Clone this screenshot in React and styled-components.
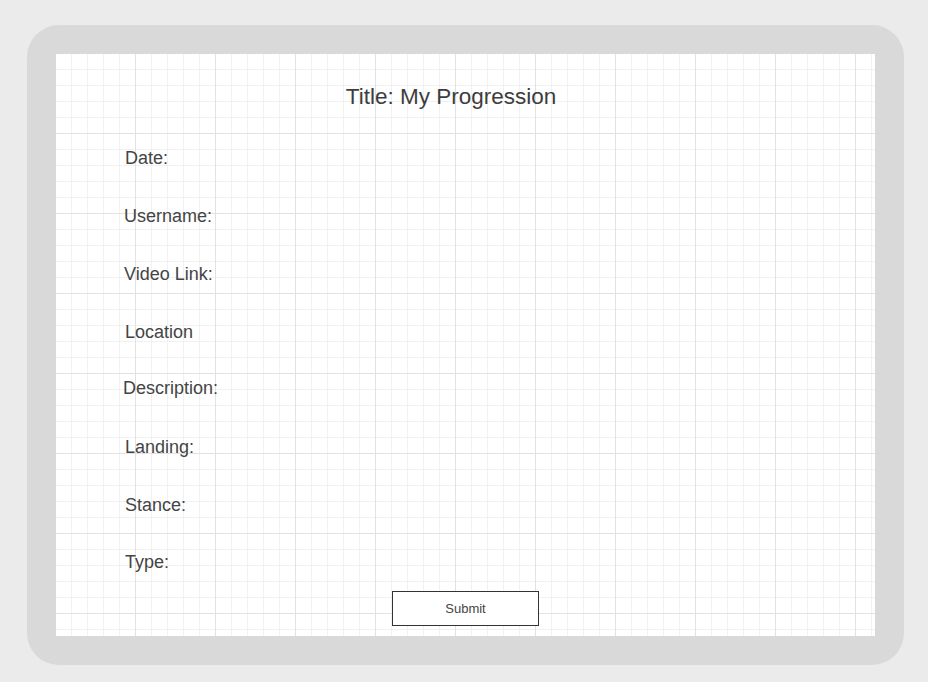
import React from 'react';
import styled, { createGlobalStyle } from 'styled-components';

const GlobalStyle = createGlobalStyle`
  html, body {
    margin: 0;
    padding: 0;
    background: #ebebeb;
    font-family: "Liberation Sans", Arial, sans-serif;
  }
`;

// indent: small nudges so labels sit where the mockup put them
const fields = [
  { text: 'Date:', indent: 1, shift: 0 },
  { text: 'Username:', indent: 0, shift: 0 },
  { text: 'Video Link:', indent: 0, shift: 0 },
  { text: 'Location', indent: 1, shift: 1 },
  { text: 'Description:', indent: -1, shift: -1 },
  { text: 'Landing:', indent: 1, shift: 0 },
  { text: 'Stance:', indent: 1, shift: 1 },
  { text: 'Type:', indent: 1, shift: 0 },
];

const Styled = {
  Page: styled.div`
    width: 928px;
    height: 682px;
    padding: 25px 0 0 27px;
    box-sizing: border-box;
  `,
  Device: styled.div`
    width: 877px;
    height: 640px;
    padding: 29px;
    box-sizing: border-box;
    background: #d9d9d9;
    border-radius: 32px;
  `,
  Screen: styled.div`
    width: 819px;
    height: 582px;
    box-sizing: border-box;
    background-color: #ffffff;
    background-image:
      linear-gradient(to right, #e2e2e2 1px, transparent 1px),
      linear-gradient(to bottom, #e2e2e2 1px, transparent 1px),
      linear-gradient(to right, #f1f1f1 1px, transparent 1px),
      linear-gradient(to bottom, #f1f1f1 1px, transparent 1px);
    background-size: 80px 80px, 80px 80px, 16px 16px, 16px 16px;
    background-position: -1px -1px;
    display: flex;
    flex-direction: column;
    padding-top: 30px;
  `,
  Title: styled.h1`
    margin: 0 0 20px;
    padding-right: 29px;
    text-align: center;
    font-size: 22.5px;
    line-height: 26px;
    font-weight: 400;
    color: #3d3d3d;
  `,
  Form: styled.form`
    display: flex;
    flex-direction: column;
    padding-left: 68px;
  `,
  Label: styled.label`
    height: 57.7px;
    display: flex;
    align-items: center;
    margin-left: ${({ $indent }) => $indent}px;
    padding-top: ${({ $shift }) => Math.max($shift, 0) * 2}px;
    padding-bottom: ${({ $shift }) => Math.max(-$shift, 0) * 2}px;
    box-sizing: border-box;
    font-size: 18px;
    color: #444444;
  `,
  Submit: styled.button`
    align-self: center;
    margin: -1px 0 0 -68px;
    width: 147px;
    height: 35px;
    background: #ffffff;
    border: 1px solid #333333;
    border-radius: 0;
    font-family: "Liberation Sans", Arial, sans-serif;
    font-size: 13px;
    color: #444444;
    padding: 0;
  `,
};

const App = () => {
  return (
    <Styled.Page>
      <GlobalStyle />
      <Styled.Device>
        <Styled.Screen>
          <Styled.Title>Title: My Progression</Styled.Title>
          <Styled.Form onSubmit={(e) => e.preventDefault()}>
            {fields.map((f) => (
              <Styled.Label key={f.text} $indent={f.indent} $shift={f.shift}>
                {f.text}
              </Styled.Label>
            ))}
            <Styled.Submit type="submit">Submit</Styled.Submit>
          </Styled.Form>
        </Styled.Screen>
      </Styled.Device>
    </Styled.Page>
  );
};

export default App;
